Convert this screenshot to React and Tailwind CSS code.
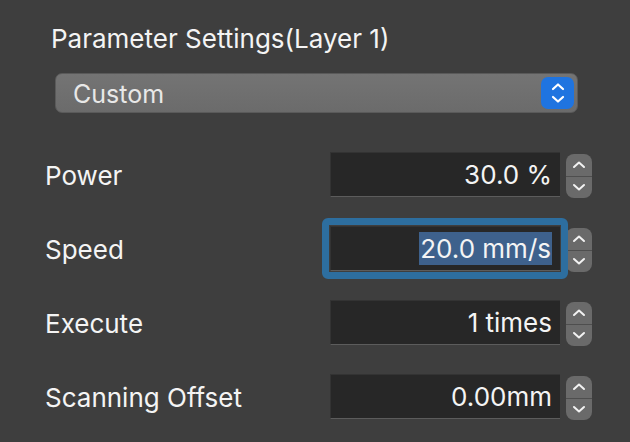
import React from "react";

const font = { fontFamily: "Inter, 'Liberation Sans', sans-serif" };

function Stepper() {
  return (
    <div className="w-[26px] h-[44px] rounded-[8px] bg-[#6a6a6a] flex flex-col items-center justify-center">
      <div className="flex-1 w-full flex items-center justify-center">
        <svg width="14" height="9" viewBox="0 0 14 9">
          <path d="M2 7 L7 2.5 L12 7" fill="none" stroke="#f2f2f2" strokeWidth="2" strokeLinecap="round" strokeLinejoin="round" />
        </svg>
      </div>
      <div className="w-full h-px bg-[#4e4e4e]" />
      <div className="flex-1 w-full flex items-center justify-center">
        <svg width="14" height="9" viewBox="0 0 14 9">
          <path d="M2 2 L7 6.5 L12 2" fill="none" stroke="#f2f2f2" strokeWidth="2" strokeLinecap="round" strokeLinejoin="round" />
        </svg>
      </div>
    </div>
  );
}

function Field({ label, value, focused }) {
  return (
    <div className="flex items-center h-[45px]">
      <div className="w-[330px] pl-[45px] pt-[2px] text-[26px] text-[#f4f4f4]">{label}</div>
      <div className="relative">
        {focused && (
          <div className="absolute left-[-8px] top-[-8px] right-[-8px] bottom-[-8px] rounded-[6px] border-[7px] border-[#2d6e9f]" />
        )}
        <div className="relative w-[230px] h-[45px] bg-[#272727] border-l border-t border-[#333] border-b border-b-[#5c5c5c] flex items-center justify-end pr-[8px] text-[26px] text-[#f4f4f4]">
          <span className={focused ? "bg-[#3e618c] px-[1px] leading-[33px]" : ""}>{value}</span>
        </div>
      </div>
      <div className="ml-[6px] mt-[3px]">
        <Stepper />
      </div>
    </div>
  );
}

export default function App() {
  return (
    <div style={font} className="w-[630px] h-[442px] bg-[#3e3e3e] overflow-hidden flex flex-col">
      <div className="pl-[51px] pt-[24px] text-[26px] leading-[30px] text-[#f4f4f4]">
        Parameter Settings(Layer 1)
      </div>
      <div className="mt-[19px] ml-[55px] w-[523px] h-[40px] rounded-[7px] bg-gradient-to-b from-[#747474] to-[#6b6b6b] border border-[#5a5a5a] flex items-center pl-[17px] pr-[3px]">
        <span className="flex-1 pt-[3px] text-[25px] text-[#e8e8e8]">Custom</span>
        <div className="w-[33px] h-[32px] rounded-[7px] bg-[#1f74e0] flex flex-col items-center justify-center gap-[4px]">
          <svg width="14" height="9" viewBox="0 0 14 9">
            <path d="M2 7 L7 2.5 L12 7" fill="none" stroke="#fff" strokeWidth="2.2" strokeLinecap="round" strokeLinejoin="round" />
          </svg>
          <svg width="14" height="9" viewBox="0 0 14 9">
            <path d="M2 2 L7 6.5 L12 2" fill="none" stroke="#fff" strokeWidth="2.2" strokeLinecap="round" strokeLinejoin="round" />
          </svg>
        </div>
      </div>
      <div className="mt-[39px] flex flex-col gap-[29px]">
        <Field label="Power" value="30.0 %" />
        <Field label="Speed" value="20.0 mm/s" focused />
        <Field label="Execute" value="1 times" />
        <Field label="Scanning Offset" value="0.00mm" />
      </div>
    </div>
  );
}
